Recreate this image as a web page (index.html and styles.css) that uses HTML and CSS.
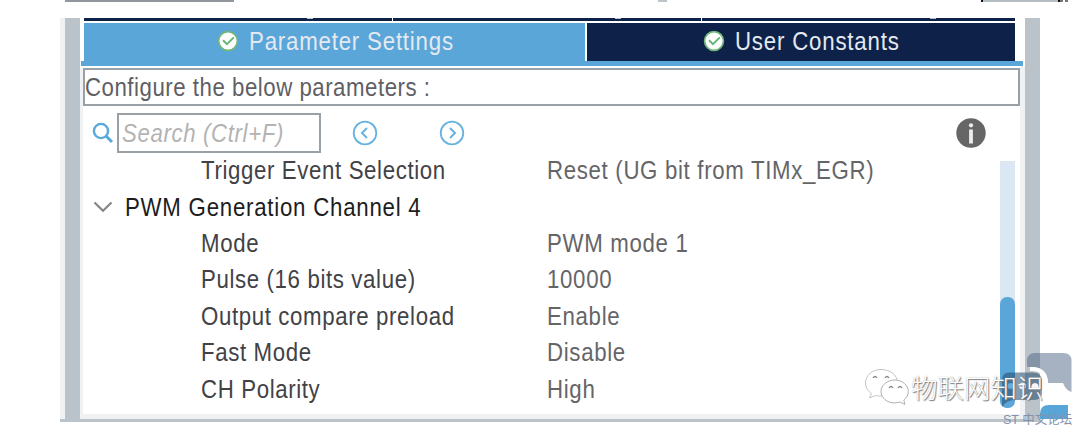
FILE: index.html
```html
<!DOCTYPE html>
<html lang="en">
<head>
<meta charset="utf-8">
<title>Parameter Settings</title>
<link rel="stylesheet" href="styles.css">
</head>
<body>
<div class="top-strip"><i class="s1"></i><i class="s2"></i><i class="s3"></i><i class="s4"></i></div>
<main class="panel">
  <div class="content">
    <div class="upper-tabs"><i class="u1"><b class="d1"></b></i><i class="u2"><b class="d2"></b></i><i class="u3"><b class="d3"></b></i></div>
    <nav class="tabs">
      <div class="tab active">
        <svg class="check" viewBox="0 0 22 22"><circle cx="11" cy="11" r="9.4" fill="#fff" stroke="#72b77c" stroke-width="1.7"/><path d="M6 10.2l4 4 6.8-6.8" fill="none" stroke="#66b47a" stroke-width="2"/></svg>
        <span class="txt">Parameter Settings</span>
      </div>
      <div class="tab">
        <svg class="check" viewBox="0 0 22 22"><circle cx="11" cy="11" r="9.4" fill="#fff" stroke="#72b77c" stroke-width="1.7"/><path d="M6 10.2l4 4 6.8-6.8" fill="none" stroke="#66b47a" stroke-width="2"/></svg>
        <span class="txt">User Constants</span>
      </div>
    </nav>
    <div class="tab-line"></div>
    <div class="caption"><span class="txt">Configure the below parameters :</span></div>
    <div class="toolbar">
      <svg class="mag" viewBox="0 0 22 22"><circle cx="9" cy="9" r="7.1" fill="none" stroke="#58a9db" stroke-width="2.4"/><path d="M14 14l6 6" stroke="#58a9db" stroke-width="3"/></svg>
      <div class="search"><span class="txt">Search (Ctrl+F)</span></div>
      <svg class="prev" viewBox="0 0 26 26"><circle cx="13" cy="13" r="11.3" fill="none" stroke="#66b3df" stroke-width="1.8"/><path d="M15 8l-5 5 5 5" fill="none" stroke="#66b3df" stroke-width="2"/></svg>
      <svg class="next" viewBox="0 0 26 26"><circle cx="13" cy="13" r="11.3" fill="none" stroke="#66b3df" stroke-width="1.8"/><path d="M11 8l5 5-5 5" fill="none" stroke="#66b3df" stroke-width="2"/></svg>
      <svg class="info" viewBox="0 0 30 30"><circle cx="15" cy="15" r="14.7" fill="#666"/><circle cx="15" cy="7.3" r="2.1" fill="#eee"/><path d="M15 11.500v14" stroke="#eee" stroke-width="3.8"/></svg>
    </div>
    <div class="body">
      <div class="rows">
        <div class="row"><div class="key"><span class="txt">Trigger Event Selection</span></div><div class="val"><span class="txt">Reset (UG bit from TIMx_EGR)</span></div></div>
        <div class="row group"><svg class="chev" viewBox="0 0 20 12"><path d="M1.5 1.5L10 9.8l8.500-8.300" fill="none" stroke="#858585" stroke-width="2.200"/></svg><span class="txt">PWM Generation Channel 4</span></div>
        <div class="row"><div class="key"><span class="txt">Mode</span></div><div class="val"><span class="txt">PWM mode 1</span></div></div>
        <div class="row"><div class="key"><span class="txt">Pulse (16 bits value)</span></div><div class="val"><span class="txt">10000</span></div></div>
        <div class="row"><div class="key"><span class="txt">Output compare preload</span></div><div class="val"><span class="txt">Enable</span></div></div>
        <div class="row"><div class="key"><span class="txt">Fast Mode</span></div><div class="val"><span class="txt">Disable</span></div></div>
        <div class="row"><div class="key"><span class="txt">CH Polarity</span></div><div class="val"><span class="txt">High</span></div></div>
      </div>
      <div class="scroll"><div class="thumb"></div></div>
    </div>
  </div>
</main>
<svg class="st-logo" viewBox="0 0 80 90">
  <path d="M27 15V9q0-8 8-8h28q8.500 0 8.500 8v31q-6-2-8.500-9H48q-1-15-15-16z" fill="#4d6583" fill-opacity=".5"/>
  <path d="M30 17h2q14 0 14 15v8" fill="none" stroke="#fff" stroke-width="4"/>
  <path d="M9 20.500h24q9 0 9 9V41q0 7-8 7H14q-7 0-12 7V28q0-7.500 7-7.500z" fill="#23486b" fill-opacity=".55"/>
  <circle cx="10.500" cy="34" r="3" fill="#61aede"/><circle cx="22.500" cy="34" r="3.200" fill="#f6f7f8"/><path d="M31 37q0-6 4-6t4 6z" fill="#f6f7f8"/><path d="M21 34h4" stroke="#909ca8"/>
  <path d="M40 67v-5q0-9 9-9h19v14z" fill="#58a5d8"/>
</svg>
<div class="st-text">ST 中文论坛</div>
<div class="watermark">
  <svg viewBox="0 0 46 38"><g fill="#fff" stroke="#b0b0b0" stroke-width="1"><path d="M17 1.500C8 1.500 1.500 7.500 1.500 15c0 5 3 8.500 6 10.500L5.500 30l6-2.500c7 2 22-1 22-13C33.500 7 26 1.500 17 1.500z" stroke="#c4c4c4"/><path d="M31 12c-7.500 0-14 5-14 11.500s6 11.500 14 11.500l5-1 5 2.500-1.200-4.500c2.700-2 4.500-5 4.500-8.500C44.300 17 38 12 31 12z"/></g><g fill="none" stroke="#888" stroke-width="1.300"><path d="M9 10q2-3 4 0M21 10q2-3 4 0M25 20q2-3 4 0M34 20q2-3 4 0"/></g></svg>
  <span>物联网知识</span>
</div>
</body>
</html>
```
FILE: styles.css
```css
* { box-sizing: border-box; }
body { margin: 0; width: 1080px; height: 436px; overflow: hidden; background: #fff; font-family: "Liberation Sans", Arial, sans-serif; position: relative; }
.top-strip { height: 18px; display: flex; align-items: flex-start; }
.top-strip i { height: 2px; }
.s1 { width: 169px; margin-left: 65px; background: #92979d; }
.s2 { width: 9px; margin-left: 424px; background: #bdc5c9; }
.s3 { width: 79px; margin-left: 314px; background: #b5bec2; border: solid #111; border-width: 0 2px; }
.s4 { width: 8px; margin-left: 0; border: solid #777; border-width: 0 3px; }
.panel { width: 980px; height: 404px; margin-left: 60px; padding-left: 5px; background: #eff1f3; border-bottom: 3px solid #bac3c9; }
.content { height: 401px; width: 975px; border: solid #bac3c9; border-width: 0 15px; display: flex; flex-direction: column; background: linear-gradient(#f0f1f3, #f0f1f3) 0 50px / 3px 400px no-repeat, linear-gradient(#f0f1f3, #f0f1f3) right 48px / 5px 400px no-repeat, linear-gradient(#eff1f2, #eff1f2) bottom / 100% 5px no-repeat, #fff; }
.upper-tabs { display: flex; gap: 1px; height: 2.500px; margin-left: 4px; width: 931px; flex: none; }
.upper-tabs i { background: #0e2148; display: flex; }
.upper-tabs b { width: 6px; height: 1px; background: #b9bfcb; }
.u1 { width: 308px; }
.u2 { width: 308px; }
.u3 { width: 313px; }
.d1 { margin-left: 223px; }
.d2 { margin-left: 222px; }
.d3 { margin-left: 228px; }
.tabs { height: 38.500px; margin: 2px 0 0 4px; width: 931px; display: flex; gap: 2px; flex: none; }
.tab { width: 428px; background: #0e2148; display: flex; align-items: center; padding-left: 116px; color: #e4e9f1; }
.tab.active { width: 501px; background: #5aa6d9; padding-left: 133px; }
.check { width: 22px; height: 22px; margin-right: 10px; margin-top: -2px; flex: none; }
.txt { display: inline-block; white-space: pre; font-size: 25px; line-height: 36px; letter-spacing: .700px; transform: scaleX(.89); transform-origin: 0 50%; }
.tab .txt { margin-top: -1px; letter-spacing: .900px; }
.tab-line { height: 5px; width: 942px; margin-left: 1px; background: #5aa6d9; flex: none; }
.caption { margin: 2px 0 0 3px; width: 937px; height: 38px; border: 2px solid #9aa1a6; color: #606064; display: flex; align-items: center; flex: none; background: #fff; }
.caption .txt { letter-spacing: .580px; }
.toolbar { height: 48px; flex: none; display: flex; align-items: center; padding: 6px 0 0 12px; }
.mag { width: 22px; height: 22px; margin-right: 3px; }
.search { width: 204px; height: 40px; border: 2px solid #9aa1a6; padding-left: 3px; color: #b3b3b3; font-style: italic; display: flex; align-items: center; }
.prev { width: 26px; margin-left: 31px; }
.next { width: 26px; margin-left: 61px; }
.info { width: 30px; margin-left: 491px; }
.body { height: 254.800px; display: flex; margin-top: -2px; flex: none; }
.rows { width: 920px; display: grid; grid-template-rows: repeat(7, 36.400px); }
.row { display: flex; align-items: center; padding-left: 121px; color: #424246; }
.key { width: 346px; }
.val { color: #656568; }
.val .txt { letter-spacing: .750px; }
.group { padding-left: 13px; color: #1d1d21; }
.group .txt { letter-spacing: .850px; }
.chev { width: 20px; height: 12px; margin-right: 12px; }
.scroll { width: 15px; height: 247px; margin-top: 9px; background: #dbe7f3; border-radius: 0 0 7px 7px; padding-top: 136px; }
.thumb { height: 111px; border-radius: 7px; background: #5aa6d9; }
.st-logo { position: absolute; left: 1000px; top: 352px; width: 80px; height: 90px; }
.st-text { position: absolute; left: 1003px; top: 411px; font: 12.500px/18px "Liberation Sans", "Noto Sans CJK SC", sans-serif; color: #8592ae; white-space: nowrap; }
.watermark { position: absolute; left: 864px; top: 368px; display: flex; align-items: center; font: 26.500px/38px "Noto Sans CJK SC", sans-serif; font-weight: 300; color: #fff; text-shadow: 1px 1px 1px #777, 0 0 1px #aaa; white-space: nowrap; }
.watermark svg { width: 46px; height: 38px; margin-right: 1px; }
```
